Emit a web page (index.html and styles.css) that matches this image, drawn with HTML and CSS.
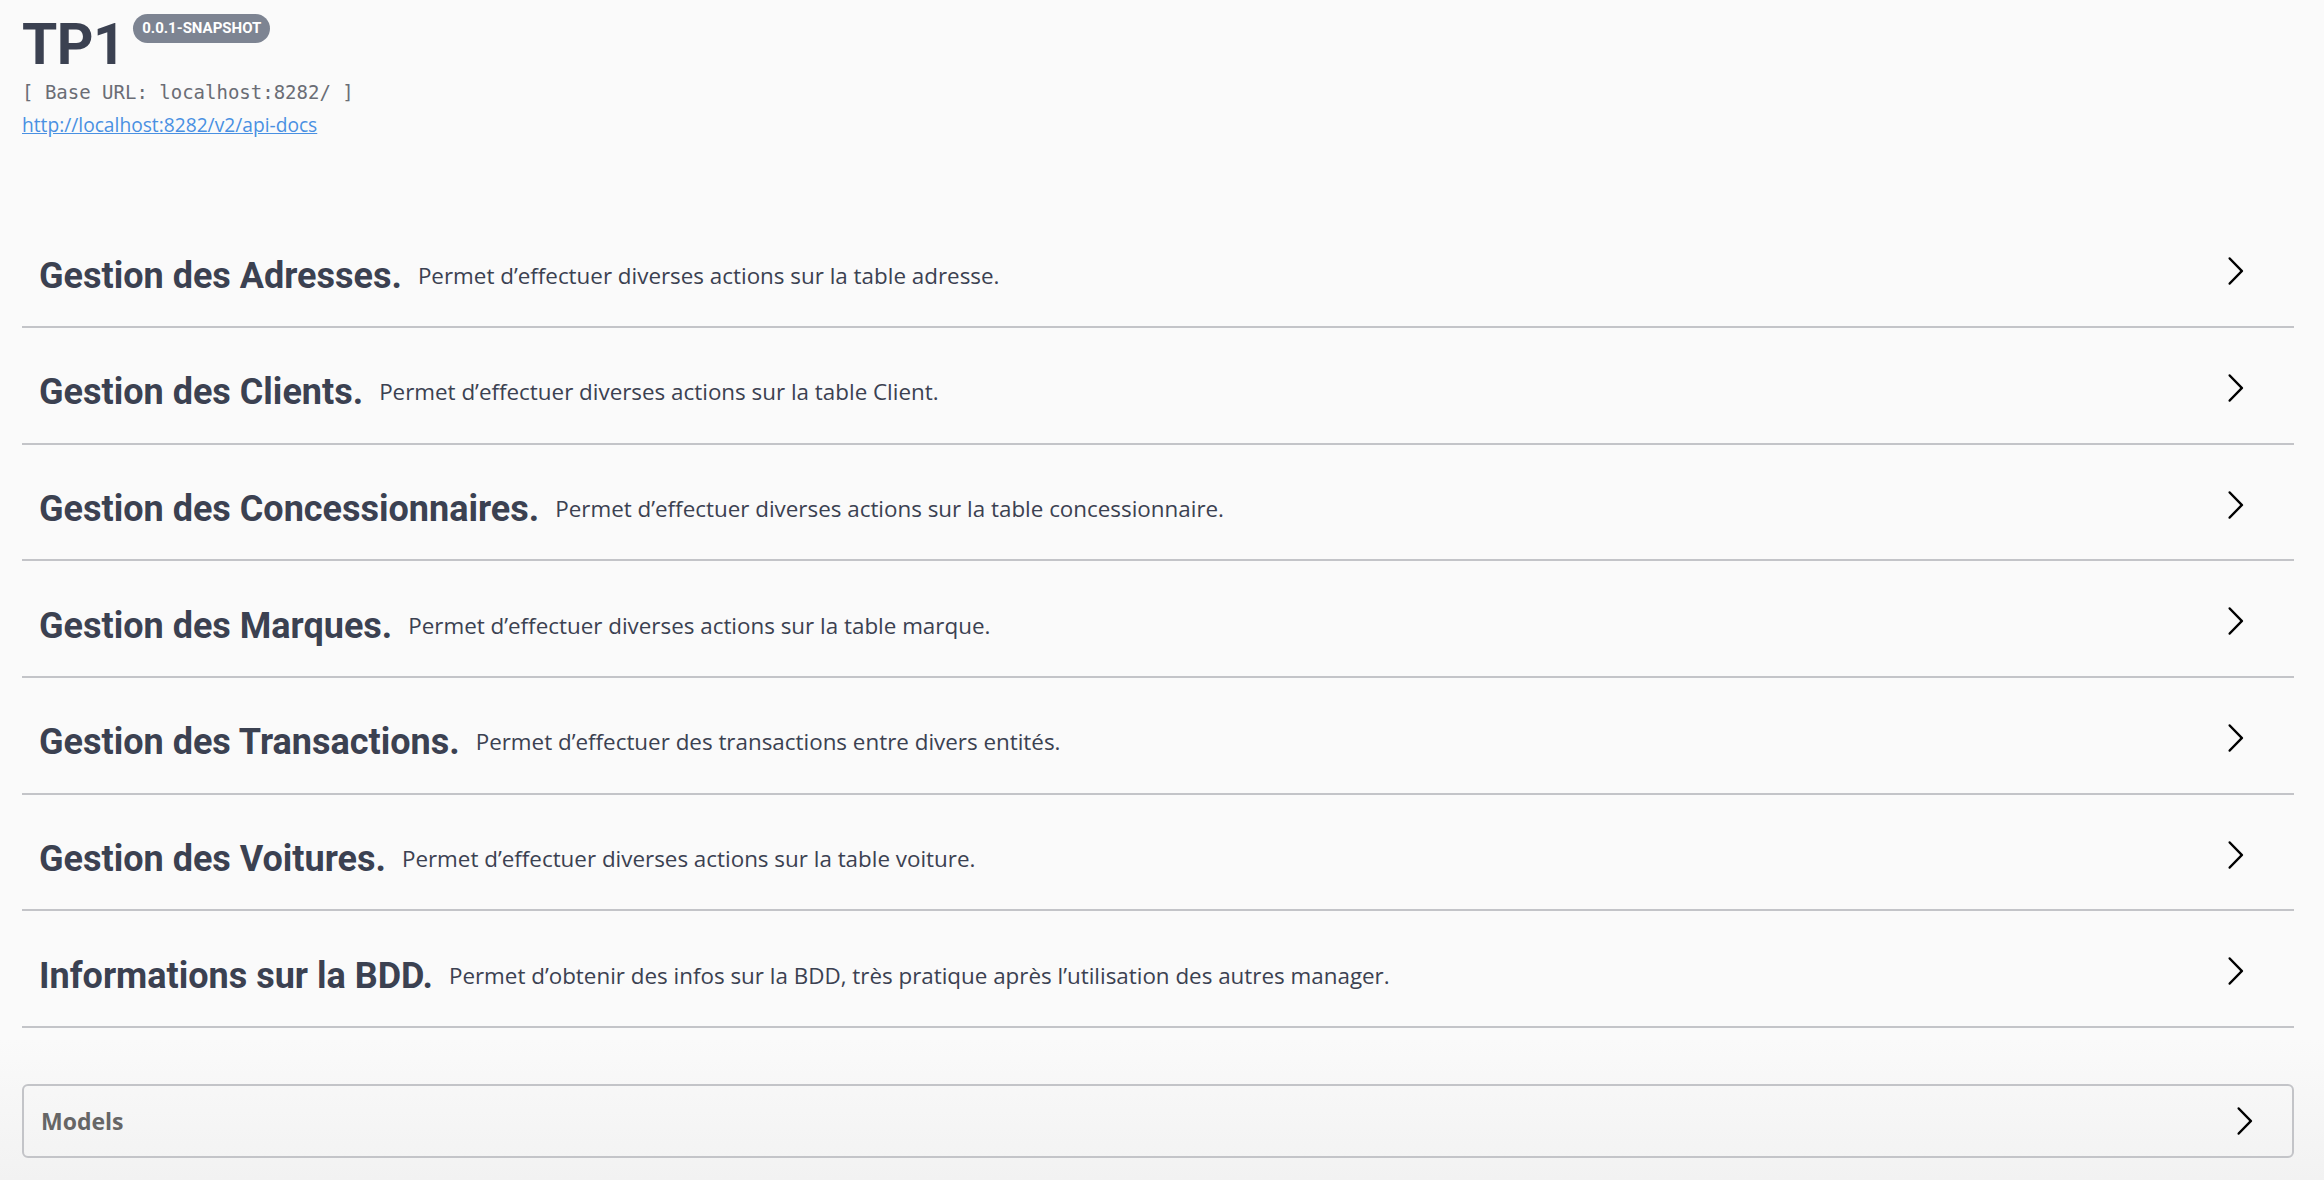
FILE: index.html
```html
<!DOCTYPE html>
<html lang="fr">
<head>
<meta charset="utf-8">
<title>TP1</title>
<link rel="stylesheet" href="styles.css">
</head>
<body>
<div class="wrapper">
  <div class="info">
    <h2 class="title">TP1 <span class="version">0.0.1-SNAPSHOT</span></h2>
    <div class="base-url">[ Base URL: localhost:8282/ ]</div>
    <div class="link-line"><a class="link" href="#">http://localhost:8282/v2/api-docs</a></div>
  </div>

  <div class="tags">
    <div class="tag-row">
      <span class="tag-name">Gestion des Adresses.</span>
      <span class="tag-desc">Permet d’effectuer diverses actions sur la table adresse.</span>
      <svg class="arrow" viewBox="0 0 20 20"><path d="M13.25 10L6.109 2.58a.697.697 0 0 1 0-.979.68.68 0 0 1 .969 0l7.830 7.908a.697.697 0 0 1 0 .979l-7.83 7.909a.68.68 0 0 1-.969 0 .697.697 0 0 1 0-.978L13.25 10z"/></svg>
    </div>
    <div class="tag-row">
      <span class="tag-name">Gestion des Clients.</span>
      <span class="tag-desc">Permet d’effectuer diverses actions sur la table Client.</span>
      <svg class="arrow" viewBox="0 0 20 20"><path d="M13.25 10L6.109 2.58a.697.697 0 0 1 0-.979.68.68 0 0 1 .969 0l7.83 7.908a.697.697 0 0 1 0 .979l-7.83 7.909a.68.68 0 0 1-.969 0 .697.697 0 0 1 0-.978L13.25 10z"/></svg>
    </div>
    <div class="tag-row">
      <span class="tag-name">Gestion des Concessionnaires.</span>
      <span class="tag-desc">Permet d’effectuer diverses actions sur la table concessionnaire.</span>
      <svg class="arrow" viewBox="0 0 20 20"><path d="M13.25 10L6.109 2.58a.697.697 0 0 1 0-.979.68.68 0 0 1 .969 0l7.83 7.908a.697.697 0 0 1 0 .979l-7.83 7.909a.68.68 0 0 1-.969 0 .697.697 0 0 1 0-.978L13.25 10z"/></svg>
    </div>
    <div class="tag-row">
      <span class="tag-name">Gestion des Marques.</span>
      <span class="tag-desc">Permet d’effectuer diverses actions sur la table marque.</span>
      <svg class="arrow" viewBox="0 0 20 20"><path d="M13.25 10L6.109 2.58a.697.697 0 0 1 0-.979.68.68 0 0 1 .969 0l7.83 7.908a.697.697 0 0 1 0 .979l-7.83 7.909a.68.68 0 0 1-.969 0 .697.697 0 0 1 0-.978L13.25 10z"/></svg>
    </div>
    <div class="tag-row">
      <span class="tag-name">Gestion des Transactions.</span>
      <span class="tag-desc">Permet d’effectuer des transactions entre divers entités.</span>
      <svg class="arrow" viewBox="0 0 20 20"><path d="M13.25 10L6.109 2.58a.697.697 0 0 1 0-.979.68.68 0 0 1 .969 0l7.83 7.908a.697.697 0 0 1 0 .979l-7.83 7.909a.68.68 0 0 1-.969 0 .697.697 0 0 1 0-.978L13.25 10z"/></svg>
    </div>
    <div class="tag-row">
      <span class="tag-name">Gestion des Voitures.</span>
      <span class="tag-desc">Permet d’effectuer diverses actions sur la table voiture.</span>
      <svg class="arrow" viewBox="0 0 20 20"><path d="M13.25 10L6.109 2.58a.697.697 0 0 1 0-.979.68.68 0 0 1 .969 0l7.83 7.908a.697.697 0 0 1 0 .979l-7.83 7.909a.68.68 0 0 1-.969 0 .697.697 0 0 1 0-.978L13.25 10z"/></svg>
    </div>
    <div class="tag-row">
      <span class="tag-name">Informations sur la BDD.</span>
      <span class="tag-desc">Permet d’obtenir des infos sur la BDD, très pratique après l’utilisation des autres manager.</span>
      <svg class="arrow" viewBox="0 0 20 20"><path d="M13.25 10L6.109 2.58a.697.697 0 0 1 0-.979.68.68 0 0 1 .969 0l7.83 7.908a.697.697 0 0 1 0 .979l-7.83 7.909a.68.68 0 0 1-.969 0 .697.697 0 0 1 0-.978L13.25 10z"/></svg>
    </div>
  </div>

  <div class="models">
    <span class="models-title">Models</span>
    <svg class="arrow models-arrow" viewBox="0 0 20 20"><path d="M13.25 10L6.109 2.58a.697.697 0 0 1 0-.979.68.68 0 0 1 .969 0l7.83 7.908a.697.697 0 0 1 0 .979l-7.83 7.909a.68.68 0 0 1-.969 0 .697.697 0 0 1 0-.978L13.25 10z"/></svg>
  </div>
</div>
</body>
</html>
```

FILE: styles.css
```css
html {
  margin: 0;
  padding: 0;
  background: #fafafa;
}

body {
  margin: 0;
  padding: 0;
  height: 1180px;
  overflow: hidden;
  background: linear-gradient(to bottom, #fafafa 0, #fafafa 1040px, #f2f2f2 1180px);
  color: #3b4151;
  font-family: "Open Sans", "Liberation Sans", sans-serif;
}

.wrapper {
  padding: 0 30px 0 22px;
}

.info {
  padding-top: 15px;
}

.title {
  display: flex;
  align-items: flex-start;
  margin: 0;
  font-family: Roboto, "Liberation Sans", sans-serif;
  font-weight: 700;
  font-size: 57px;
  line-height: 60px;
  color: #3b4151;
  letter-spacing: -0.5px;
}

.version {
  display: inline-flex;
  align-items: center;
  justify-content: center;
  margin: -1px 0 0 8px;
  height: 29px;
  width: 137px;
  border-radius: 15px;
  background: #7d8492;
  color: #fff;
  font-family: Roboto, "Liberation Sans", sans-serif;
  font-size: 15px;
  font-weight: 700;
  line-height: 29px;
  letter-spacing: 0;
}

.base-url {
  margin-top: 5px;
  font-family: "DejaVu Sans Mono", "Liberation Mono", monospace;
  font-size: 19px;
  line-height: 24px;
  color: #6a6d75;
}

.link-line {
  margin-top: 8px;
  line-height: 26px;
  height: 26px;
}

.link {
  font-family: "Open Sans", "Liberation Sans", sans-serif;
  font-size: 19.2px;
  color: #4990e2;
  text-decoration: underline;
}

.tags {
  margin-top: 73.5px;
}

.tag-row {
  display: flex;
  align-items: center;
  box-sizing: border-box;
  height: 116.67px;
  padding: 14px 0 0 17px;
  border-bottom: 2px solid #c3c4c8;
}

.tag-name {
  font-family: Roboto, "Liberation Sans", sans-serif;
  font-weight: 700;
  font-size: 36px;
  line-height: 44px;
  color: #3b4151;
  white-space: nowrap;
}

.tag-desc {
  margin-left: 16px;
  font-family: "Open Sans", "Liberation Sans", sans-serif;
  font-size: 22.4px;
  line-height: 30px;
  color: #3b4151;
  white-space: nowrap;
}

.arrow {
  width: 32px;
  height: 32px;
  margin-left: auto;
  margin-right: 43px;
  margin-top: -9px;
  flex: none;
}

.arrow path {
  fill: #000;
}

.models {
  display: flex;
  align-items: center;
  box-sizing: border-box;
  margin-top: 56px;
  height: 74px;
  border: 2px solid #c3c4c8;
  border-radius: 6px;
  padding-left: 17px;
}

.models-title {
  font-family: "Open Sans", "Liberation Sans", sans-serif;
  font-weight: 700;
  font-size: 23px;
  line-height: 30px;
  color: #666;
}

.models-arrow {
  margin-top: 0;
  margin-right: 32px;
}
```
